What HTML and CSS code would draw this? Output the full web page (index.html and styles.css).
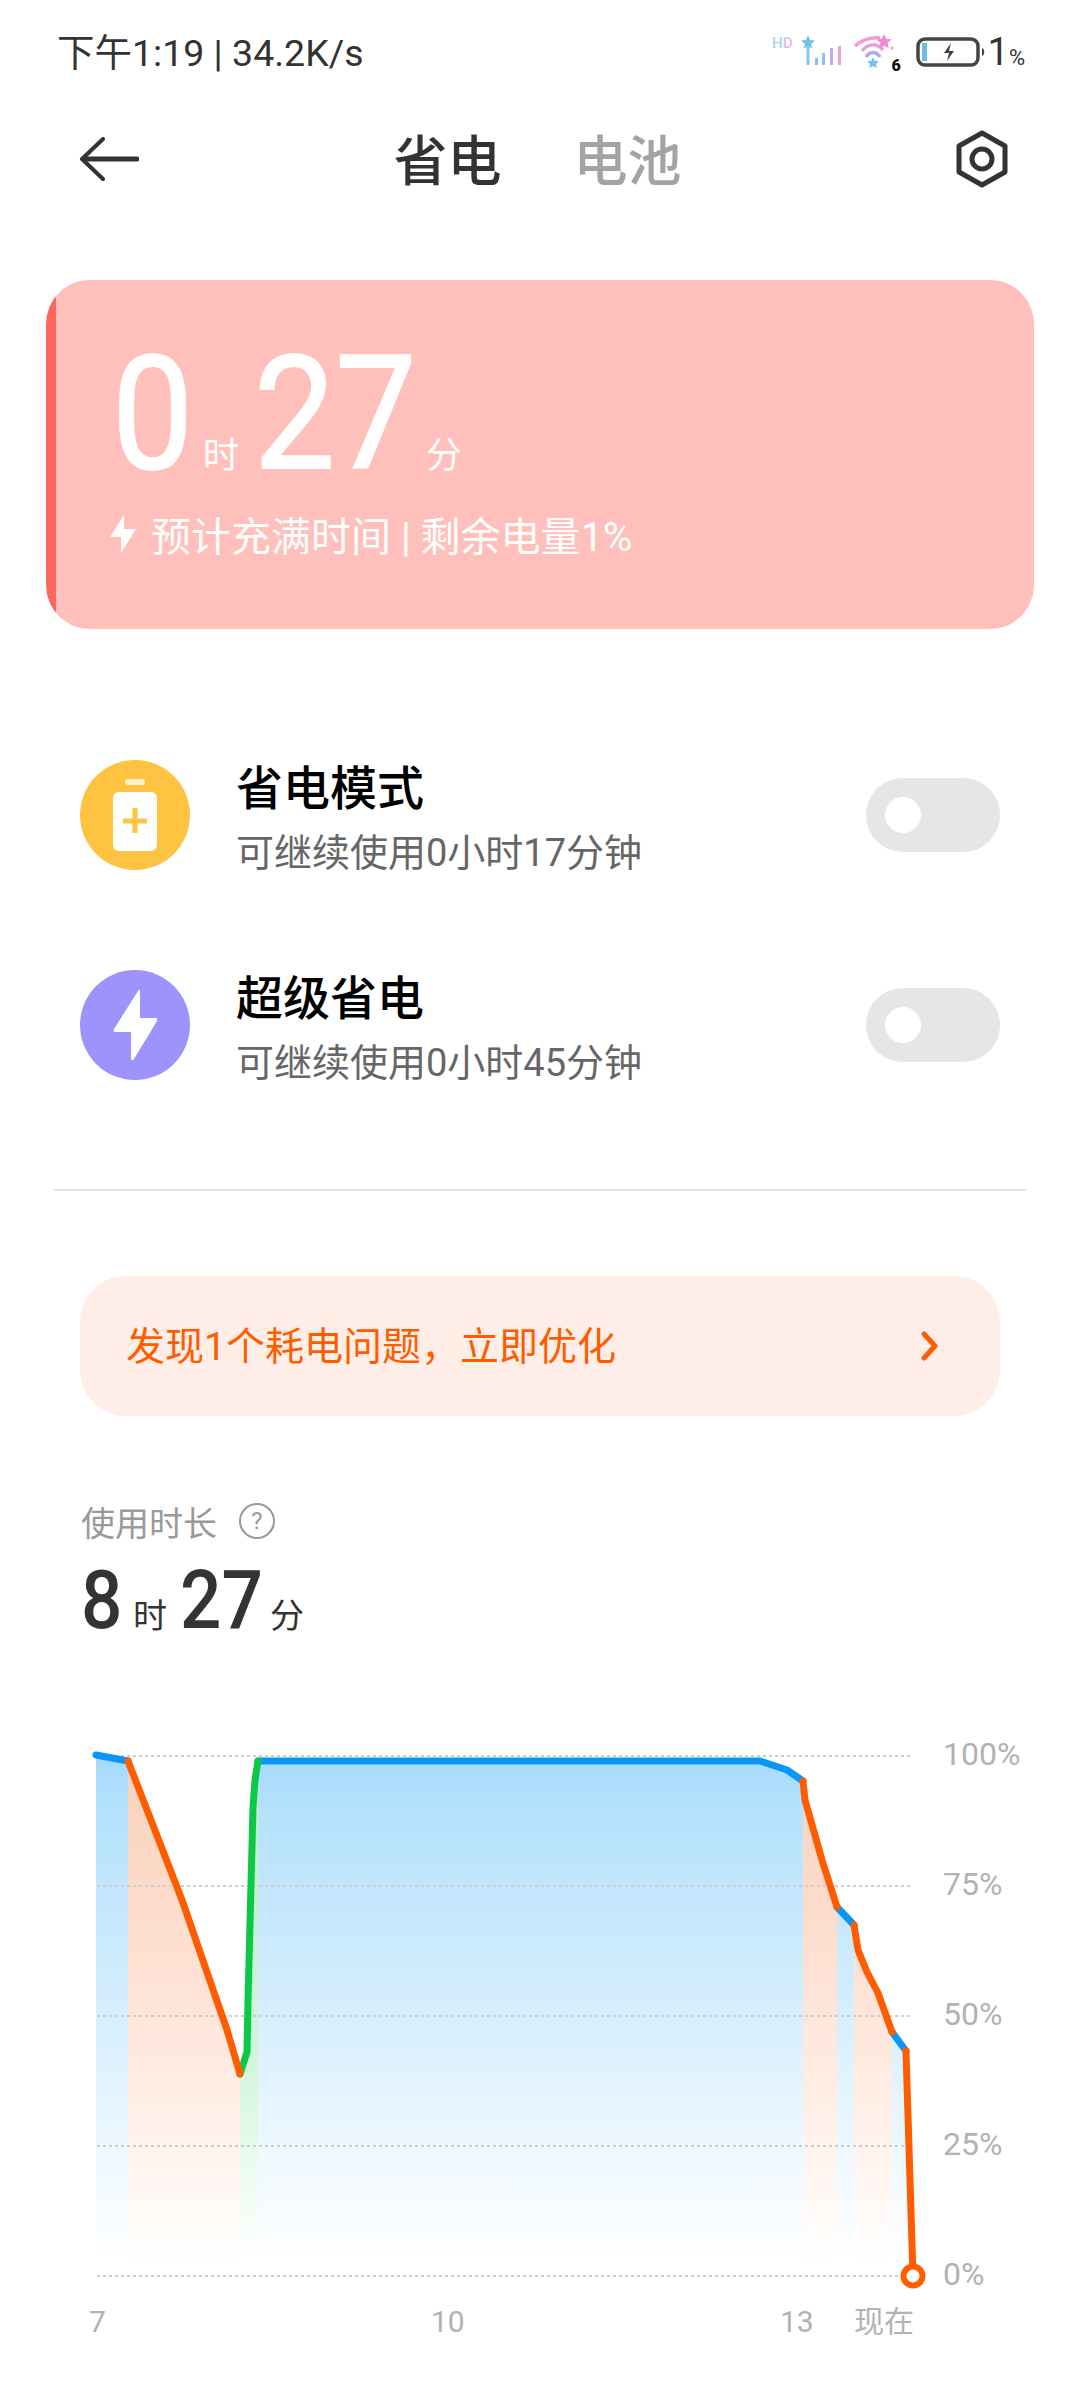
FILE: index.html
```html
<!DOCTYPE html>
<html lang="zh-CN">
<head>
    <meta charset="UTF-8">
    <meta name="viewport" content="width=device-width, initial-scale=1.0">
    <title>省电</title>
    <link rel="stylesheet" href="styles.css">
</head>
<body>
    <div class="status-bar">
        <span class="status-time">下午1:19 | 34.2K/s</span>
        <div class="status-icons">
            <svg class="status-signal" width="76" height="36" viewBox="0 0 76 36">
                <text class="hd-label" x="0" y="19"><tspan fill="#a9d2f0">H</tspan><tspan fill="#e6b8e6">D</tspan></text>
                <path d="M36 6l2 5 5 .4-4 3.300 1.300 5-4.300-2.700-4.300 2.700 1.300-5-4-3.300 5-.4z" fill="#6cc2ee"/>
                <path d="M36 16v20" stroke="#7cc8ec" stroke-width="3" fill="none"/>
                <rect x="43" y="29" width="3" height="7" fill="#7cc8ec"/>
                <rect x="50" y="24" width="3" height="12" fill="#8ec0e8"/>
                <rect x="58" y="19" width="3" height="17" fill="#c8a8e0"/>
                <rect x="66" y="17" width="3" height="19" fill="#f0a0d8"/>
            </svg>
            <svg class="status-wifi" width="52" height="40" viewBox="0 0 52 40">
                <path d="M2 14C9 8 18 5 27 6" stroke="#f49ad2" stroke-width="3.500" fill="none"/>
                <path d="M9 19C15 11 24 11 30 18" stroke="#e6a0dc" stroke-width="3.500" fill="none"/>
                <path d="M13 25C17 19 23 19 27 25" stroke="#b8a6e6" stroke-width="3.500" fill="none"/>
                <path d="M31 2l2.200 4.800 5.300.7-3.900 3.600 1 5.200-4.600-2.600-4.600 2.600 1-5.200-3.900-3.600 5.300-.7z" fill="#f587cf"/>
                <path d="M20 25l1.800 3.700 4.200.5-3 2.900.7 4-3.700-2-3.700 2 .7-4-3-2.900 4.200-.5z" fill="#74c4f0"/>
                <circle cx="39" cy="16" r="1.600" fill="#f49ad2"/>
            </svg>
            <span class="wifi-num">6</span>
            <svg class="status-battery" width="70" height="30" viewBox="0 0 70 30">
                <rect x="2" y="2" width="60" height="26" rx="7" fill="none" stroke="#444" stroke-width="3.500"/>
                <rect x="6" y="6" width="5" height="18" fill="#6cbce8"/>
                <path d="M35 6l-7 10h5l-2 8 7-10h-5z" fill="#444"/>
                <path d="M66 11c3 1 3 7 0 8z" fill="#444"/>
            </svg>
            <span class="status-level">1<small>%</small></span>
        </div>
    </div>

    <nav class="top-nav">
        <svg class="nav-back" width="60" height="44" viewBox="0 0 60 44">
            <path d="M58 22H4" stroke="#333" stroke-width="5" stroke-linecap="round" fill="none"/>
            <path d="M24 2L3 22l21 20" stroke="#333" stroke-width="4" stroke-linecap="round" stroke-linejoin="round" fill="none"/>
        </svg>
        <div class="nav-tabs">
            <span class="tab tab-active">省电</span>
            <span class="tab">电池</span>
        </div>
        <svg class="nav-settings" width="52" height="58" viewBox="0 0 52 58">
            <path d="M26 3l23 13v26L26 55 3 42V16z" stroke="#333" stroke-width="5" stroke-linejoin="round" fill="none"/>
            <circle cx="26" cy="29" r="10" stroke="#333" stroke-width="5" fill="none"/>
        </svg>
    </nav>

    <section class="charge-card">
        <div class="charge-time">
            <span class="charge-num">0</span><span class="charge-unit">时</span>
            <span class="charge-num charge-num-wide">27</span><span class="charge-unit">分</span>
        </div>
        <div class="charge-note">
            <svg width="26" height="38" viewBox="0 0 26 38">
                <path d="M14 0L0 22h11v16l15-24H14z" fill="#fff"/>
            </svg>
            <span>预计充满时间 | 剩余电量1%</span>
        </div>
    </section>

    <section class="mode-list">
        <div class="mode-row">
            <div class="mode-icon mode-icon-yellow">
                <svg width="44" height="72" viewBox="0 0 44 72">
                    <rect x="12" y="0" width="20" height="6" rx="3" fill="#fff" opacity=".75"/>
                    <rect x="0" y="13" width="44" height="59" rx="6" fill="#fff"/>
                    <path d="M22 29v25M10 42h24" stroke="#ffc342" stroke-width="5" fill="none"/>
                </svg>
            </div>
            <div class="mode-text">
                <div class="mode-title">省电模式</div>
                <div class="mode-sub">可继续使用0小时17分钟</div>
            </div>
            <div class="toggle"><span class="toggle-knob"></span></div>
        </div>
        <div class="mode-row">
            <div class="mode-icon mode-icon-purple">
                <svg width="46" height="72" viewBox="0 0 46 72">
                    <path d="M26 2L2 40c-1 2 0 3 2 3h15v26c0 3 2 3 3 1l23-38c1-2 0-3-2-3H28V3c0-3-1-3-2-1z" fill="#fff"/>
                </svg>
            </div>
            <div class="mode-text">
                <div class="mode-title">超级省电</div>
                <div class="mode-sub">可继续使用0小时45分钟</div>
            </div>
            <div class="toggle"><span class="toggle-knob"></span></div>
        </div>
    </section>

    <hr class="divider">

    <div class="issue-banner">
        <span class="issue-text">发现1个耗电问题，立即优化</span>
        <svg width="20" height="30" viewBox="0 0 20 30">
            <path d="M4 3l11 12L4 27" stroke="#ff5c00" stroke-width="5" stroke-linecap="round" stroke-linejoin="round" fill="none"/>
        </svg>
    </div>

    <section class="usage">
        <div class="usage-label">
            <span>使用时长</span>
            <span class="help-mark">?</span>
        </div>
        <div class="usage-value">
            <span class="usage-num">8</span><span class="usage-unit">时</span>
            <span class="usage-num usage-num-wide">27</span><span class="usage-unit">分</span>
        </div>
    </section>

    <svg class="chart" width="1080" height="630" viewBox="0 1730 1080 630">
        <defs>
            <linearGradient id="fillBlue" gradientUnits="userSpaceOnUse" x1="0" y1="1761" x2="0" y2="2262">
                <stop offset="0" stop-color="#a6dbfb"/>
                <stop offset=".1" stop-color="#b5e1fc"/>
                <stop offset=".5" stop-color="#d6eefe"/>
                <stop offset=".78" stop-color="#eef8ff"/>
                <stop offset="1" stop-color="#fff"/>
            </linearGradient>
            <linearGradient id="fillOrange" gradientUnits="userSpaceOnUse" x1="0" y1="1761" x2="0" y2="2262">
                <stop offset="0" stop-color="#f8d3bd"/>
                <stop offset=".3" stop-color="#fddccc"/>
                <stop offset=".6" stop-color="#ffeae0"/>
                <stop offset=".8" stop-color="#fff5f0"/>
                <stop offset="1" stop-color="#fff"/>
            </linearGradient>
            <linearGradient id="fillGreen" gradientUnits="userSpaceOnUse" x1="0" y1="1761" x2="0" y2="2262">
                <stop offset="0" stop-color="#bfeccb"/>
                <stop offset=".6" stop-color="#d2f5dc"/>
                <stop offset=".8" stop-color="#e9fbee"/>
                <stop offset="1" stop-color="#fff"/>
            </linearGradient>
        </defs>

        <polygon fill="url(#fillBlue)" points="96,1755 128,1761 128,2276 96,2276"/>
        <polygon fill="url(#fillBlue)" points="258,1761 760,1761 787,1770 803,1781 803,2276 258,2276"/>
        <polygon fill="url(#fillBlue)" points="837,1907 854,1925 854,2276 837,2276"/>
        <polygon fill="url(#fillBlue)" points="892,2032 906,2051 913,2276 892,2276"/>
        <polygon fill="url(#fillOrange)" points="128,1761 142,1797 182,1900 227,2030 240,2074 240,2276 128,2276"/>
        <polygon fill="url(#fillOrange)" points="803,1781 807,1802 822,1860 837,1907 837,2276 803,2276"/>
        <polygon fill="url(#fillOrange)" points="854,1925 858,1950 867,1972 878,1993 892,2032 892,2276 854,2276"/>
        <polygon fill="url(#fillGreen)" points="240,2074 247,2052 248,2000 253,1807 258,1761 258,2276 240,2276"/>

        <g class="chart-grid">
            <path d="M97 1756H913"/>
            <path d="M97 1886H913"/>
            <path d="M97 2016H913"/>
            <path d="M97 2146H913"/>
            <path d="M97 2276H913"/>
        </g>

        <g class="chart-line line-blue">
            <path d="M96 1755L128 1761"/>
            <path d="M258 1761H760L787 1770L803 1781"/>
            <path d="M837 1907L854 1925"/>
            <path d="M892 2032L906 2051"/>
        </g>
        <path class="chart-line line-green" d="M240 2074L247 2052L248 2000L253 1807L255 1780L258 1761"/>
        <g class="chart-line line-orange">
            <path d="M128 1761L142 1797L182 1900L227 2030L240 2074"/>
            <path d="M803 1781L805 1800L822 1860L837 1907"/>
            <path d="M854 1925L858 1950L867 1972L878 1993L892 2032"/>
            <path d="M906 2051L913 2276"/>
        </g>
        <circle cx="913" cy="2276" r="9.500" fill="#fff" stroke="#ff5c00" stroke-width="6"/>

        <g class="chart-label">
            <text x="943" y="1765">100%</text>
            <text x="943" y="1895">75%</text>
            <text x="943" y="2025">50%</text>
            <text x="943" y="2155">25%</text>
            <text x="943" y="2285">0%</text>
        </g>
        <g class="chart-label chart-label-x">
            <text x="89" y="2332">7</text>
            <text x="431" y="2332">10</text>
            <text x="780" y="2332">13</text>
            <text x="854" y="2332">现在</text>
        </g>
    </svg>
</body>
</html>
```

FILE: styles.css
```css
body {
    margin: 0;
    width: 1080px;
    height: 2400px;
    overflow: hidden;
    background: #fff;
    color: #333;
    font-family: Roboto, "Noto Sans CJK SC", sans-serif;
}
.status-bar {
    height: 104px;
    padding: 0 55px 0 57px;
    display: flex;
    align-items: center;
    justify-content: space-between;
}
.status-time {
    font-size: 37.500px;
    margin-bottom: 5px;
}
.status-icons {
    display: flex;
    align-items: center;
}
.status-signal {
    margin: 0 5px 10px 0;
}
.hd-label {
    font-size: 15px;
    font-weight: 500;
}
.wifi-num {
    font-size: 16px;
    font-weight: 900;
    color: #111;
    margin: 26px 0 0 -13px;
    width: 24px;
}
.status-level {
    font-size: 38px;
    margin-left: 2px;
}
.status-level small {
    font-size: 22px;
}
.top-nav {
    height: 110px;
    padding: 0 72px 0 79px;
    display: flex;
    align-items: center;
    justify-content: space-between;
}
.nav-tabs {
    display: flex;
    gap: 72px;
    margin: 0 20px 3px 0;
}
.tab {
    font-size: 54px;
    font-weight: 500;
    color: #a3a3a3;
}
.tab-active {
    color: #333;
}
.charge-card {
    height: 349px;
    margin: 66px 46px 0;
    box-sizing: border-box;
    padding: 53px 0 0 66px;
    border-radius: 44px;
    background: linear-gradient(to right, #ff675c 10px, #ffc0bb 10px);
    color: #fff;
}
.charge-time {
    display: flex;
    align-items: baseline;
    height: 162px;
    line-height: 162px;
}
.charge-num {
    width: 91px;
    font-size: 157px;
    font-weight: 400;
    -webkit-text-stroke: 2px #fff;
    transform: scaleX(.92);
    transform-origin: left;
}
.charge-num-wide {
    width: 172px;
}
.charge-unit {
    font-size: 36px;
    margin-right: 15px;
}
.charge-note {
    display: flex;
    align-items: center;
    gap: 15px;
    margin: 10px 0 0 -2px;
    font-size: 40px;
}
.mode-list {
    margin-top: 81px;
}
.mode-row {
    height: 210px;
    padding: 0 80px;
    display: flex;
    align-items: center;
}
.mode-icon {
    width: 110px;
    height: 110px;
    border-radius: 50%;
    display: flex;
    align-items: center;
    justify-content: center;
}
.mode-icon-yellow {
    background: #ffc342;
}
.mode-icon-purple {
    background: #9e93fd;
}
.mode-text {
    flex: 1;
    margin-left: 46px;
    padding-top: 10px;
}
.mode-title {
    font-size: 47px;
    line-height: 60px;
    font-weight: 500;
    color: #000;
}
.mode-sub {
    font-size: 38px;
    line-height: 56px;
    margin-top: 6px;
    color: #666;
}
.toggle {
    width: 134px;
    height: 74px;
    border-radius: 37px;
    background: #e6e6e6;
    display: flex;
    align-items: center;
    padding-left: 19px;
    box-sizing: border-box;
}
.toggle-knob {
    width: 36px;
    height: 36px;
    border-radius: 50%;
    background: #fff;
}
.divider {
    margin: 59px 54px 0;
    height: 2px;
    border: 0;
    background: #e2e2e2;
}
.issue-banner {
    height: 140px;
    margin: 85px 80px 0;
    padding: 0 60px 0 46px;
    border-radius: 46px;
    background: #ffeee7;
    color: #ff5c00;
    display: flex;
    align-items: center;
    justify-content: space-between;
}
.issue-text {
    font-size: 39px;
    margin-bottom: 6px;
}
.usage {
    margin: 83px 0 0 81px;
    height: 231px;
}
.usage-label {
    height: 44px;
    display: flex;
    align-items: center;
    gap: 22px;
    font-size: 34px;
    color: #999;
}
.help-mark {
    width: 32px;
    height: 32px;
    border: 2px solid #999;
    border-radius: 50%;
    font-size: 24px;
    line-height: 32px;
    text-align: center;
}
.usage-value {
    display: flex;
    align-items: baseline;
    margin-top: 8px;
    height: 100px;
    line-height: 100px;
}
.usage-num {
    width: 39px;
    font-size: 81px;
    font-weight: 500;
    transform: scaleX(.9);
    transform-origin: left;
}
.usage-num-wide {
    width: 77px;
}
.usage-unit {
    font-size: 34px;
    margin: 0 13px 0 13px;
}
.chart {
    display: block;
}
.chart-grid path {
    stroke: #cdcdcd;
    stroke-width: 2;
    stroke-dasharray: 3 3;
    fill: none;
}
.chart-line,
.chart-line path {
    fill: none;
    stroke-width: 7;
    stroke-linecap: round;
    stroke-linejoin: round;
}
.line-blue path {
    stroke: #0a96f5;
}
.line-green {
    stroke: #0bc846;
}
.line-orange path {
    stroke: #ff5c00;
}
.chart-label text {
    font-size: 32px;
    fill: #b2b2b2;
}
.chart-label-x text {
    font-size: 30px;
}
```
